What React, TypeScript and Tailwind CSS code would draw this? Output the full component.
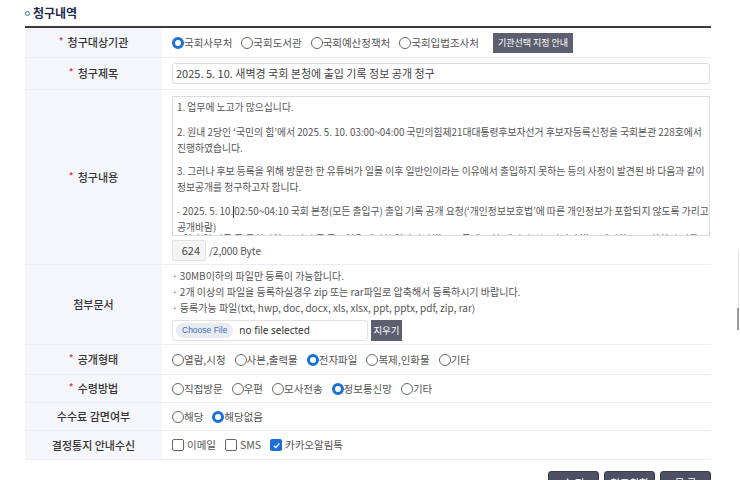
import React from 'react';

const FONT = "font-['Noto_Sans_CJK_KR','Noto_Sans',sans-serif]";

function Radio({ label, checked = false }: { label: string; checked?: boolean }) {
  return (
    <span className="flex items-center mr-[9px]">
      {checked ? (
        <span className="w-[12px] h-[12px] rounded-full border-[3.5px] border-[#1a6fd8] bg-white" />
      ) : (
        <span className="w-[12px] h-[12px] rounded-full border border-[#666] bg-white" />
      )}
      <span className="text-[10.5px] text-[#555]">{label}</span>
    </span>
  );
}

function Check({ label, checked = false }: { label: string; checked?: boolean }) {
  return (
    <span className="flex items-center mr-[9px]">
      {checked ? (
        <span className="w-[12px] h-[12px] rounded-[2px] bg-[#1a6fd8] flex items-center justify-center">
          <svg width="9" height="9" viewBox="0 0 10 10">
            <path d="M2 5.2 L4.2 7.3 L8.2 2.8" stroke="white" strokeWidth="1.6" fill="none" />
          </svg>
        </span>
      ) : (
        <span className="w-[12px] h-[12px] rounded-[2px] border border-[#666] bg-white" />
      )}
      <span className="text-[10.5px] text-[#555] ml-[3px]">{label}</span>
    </span>
  );
}

function Row({
  label,
  required = false,
  h,
  children,
}: {
  label: string;
  required?: boolean;
  h: string;
  children: React.ReactNode;
}) {
  return (
    <div className={`flex border-b border-[#eceef1] ${h}`}>
      <div className="w-[137px] shrink-0 bg-[#f4f6f9] flex items-center justify-center text-[11px] font-medium text-[#333]">
        {required && <span className="text-[#e0344a] mr-[4px] -mt-[4px] text-[10px]">*</span>}
        {label}
      </div>
      <div className="flex-1 pl-[10px] pr-px flex items-center">{children}</div>
    </div>
  );
}

export default function App() {
  return (
    <div className={`w-[740px] h-[480px] overflow-hidden bg-white relative ${FONT}`}>
      <div className="pl-[25px] pr-[29px]">
        {/* section title */}
        <div className="h-[26px] flex items-center">
          <span className="w-[5px] h-[5px] rounded-full border-[1.5px] border-[#2b86c9] mr-[3px] mt-[1px]" />
          <span className="text-[12px] font-bold text-[#1f2d4d]">청구내역</span>
        </div>

        <div className="border-t-2 border-[#3a3a3a]">
          <Row label="청구대상기관" required h="h-[30px]">
            <Radio label="국회사무처" checked />
            <Radio label="국회도서관" />
            <Radio label="국회예산정책처" />
            <Radio label="국회입법조사처" />
            <button className="ml-[5px] h-[20px] px-[5px] bg-[#5d5f70] text-white text-[9px]">
              기관선택 지정 안내
            </button>
          </Row>

          <Row label="청구제목" required h="h-[32px]">
            <div className="w-full h-[21px] border border-[#dcdcdc] rounded-[3px] flex items-center px-[3px] text-[11px] text-[#444]">
              2025. 5. 10. 새벽경 국회 본청에 출입 기록 정보 공개 청구
            </div>
          </Row>

          <Row label="청구내용" required h="h-[175px]">
            <div className="w-full flex flex-col self-start pt-[6px]">
              <div className="h-[140px] border border-[#dcdcdc] overflow-hidden pl-[4px] pt-[2px] text-[9.8px] leading-[16px] text-[#555] whitespace-nowrap">
                <div className="mb-[9px]">1. 업무에 노고가 많으십니다.</div>
                <div>2. 원내 2당인 ‘국민의 힘’에서 2025. 5. 10. 03:00~04:00 국민의힘제21대대통령후보자선거 후보자등록신청을 국회본관 228호에서</div>
                <div className="mb-[7px]">진행하였습니다.</div>
                <div>3. 그러나 후보 등록을 위해 방문한 한 유튜버가 일몰 이후 일반인이라는 이유에서 출입하지 못하는 등의 사정이 발견된 바 다음과 같이</div>
                <div className="mb-[8px]">정보공개를 청구하고자 합니다.</div>
                <div>
                  - 2025. 5. 10.<span className="inline-block w-px h-[12px] bg-[#333] align-middle" />02:50~04:10 국회 본청(모든 출입구) 출입 기록 공개 요청(‘개인정보보호법’에 따른 개인정보가 포함되지 않도록 가리고
                </div>
                <div>공개바람)</div>
                <div className="-mt-[4px]">- 위 출입 기록 중 국회의원, 보좌진 등 공무원은 제외한 일반인의 별도로 공개 요청(개인정보는 가려서 별도 제외하고) 포함하여 이를</div>
              </div>
              <div className="flex items-center mt-[4px]">
                <div className="w-[34px] h-[21px] bg-[#f5f5f5] border border-[#e3e3e3] rounded-[2px] flex items-center justify-end pr-[5px] text-[11px] text-[#444]">
                  624
                </div>
                <span className="ml-[3px] text-[10px] text-[#555]">/2,000 Byte</span>
              </div>
            </div>
          </Row>

          <Row label="첨부문서" h="h-[80px]">
            <div className="flex flex-col w-full">
              <div className="text-[10px] leading-[16px] text-[#555]">
                <div>· 30MB이하의 파일만 등록이 가능합니다.</div>
                <div>· 2개 이상의 파일을 등록하실경우 zip 또는 rar파일로 압축해서 등록하시기 바랍니다.</div>
                <div>· 등록가능 파일(txt, hwp, doc, docx, xls, xlsx, ppt, pptx, pdf, zip, rar)</div>
              </div>
              <div className="flex items-center mt-[4px]">
                <div className="w-[196px] h-[21px] border border-[#e3e3e3] rounded-[3px] flex items-center px-[3px]">
                  <span className="h-[15px] px-[6px] rounded-full bg-[#e8ecf2] text-[8.5px] text-[#3f6fb0] flex items-center font-['Liberation_Sans',sans-serif]">
                    Choose File
                  </span>
                  <span className="ml-[6px] text-[10px] text-[#333] font-['Noto_Sans',sans-serif]">no file selected</span>
                </div>
                <button className="ml-[3px] h-[21px] w-[31px] bg-[#5d5f70] text-white text-[9.5px]">지우기</button>
              </div>
            </div>
          </Row>

          <Row label="공개형태" required h="h-[30px]">
            <Radio label="열람,시청" />
            <Radio label="사본,출력물" />
            <Radio label="전자파일" checked />
            <Radio label="복제,인화물" />
            <Radio label="기타" />
          </Row>

          <Row label="수령방법" required h="h-[28px]">
            <Radio label="직접방문" />
            <Radio label="우편" />
            <Radio label="모사전송" />
            <Radio label="정보통신망" checked />
            <Radio label="기타" />
          </Row>

          <Row label="수수료 감면여부" h="h-[28px]">
            <Radio label="해당" />
            <Radio label="해당없음" checked />
          </Row>

          <Row label="결정통지 안내수신" h="h-[29px]">
            <Check label="이메일" />
            <Check label="SMS" />
            <Check label="카카오알림톡" checked />
          </Row>
        </div>

        <div className="flex justify-end gap-[5px] mt-[11px]">
          {['수 정', '청구취하', '목 록'].map((t) => (
            <button
              key={t}
              className="w-[51px] h-[24px] rounded-t-[3px] bg-[#4b5064] border border-[#3a3e50] text-white text-[10.5px] flex items-start justify-center pt-[3px]"
            >
              {t}
            </button>
          ))}
        </div>
      </div>

      {/* page scrollbar edge */}
      <div className="absolute right-[1px] top-[250px] w-px h-[80px] bg-[#e6e6e6]" />
      <div className="absolute right-[1px] top-[308px] w-[2px] h-[22px] bg-[#9a9a9a]" />
    </div>
  );
}
